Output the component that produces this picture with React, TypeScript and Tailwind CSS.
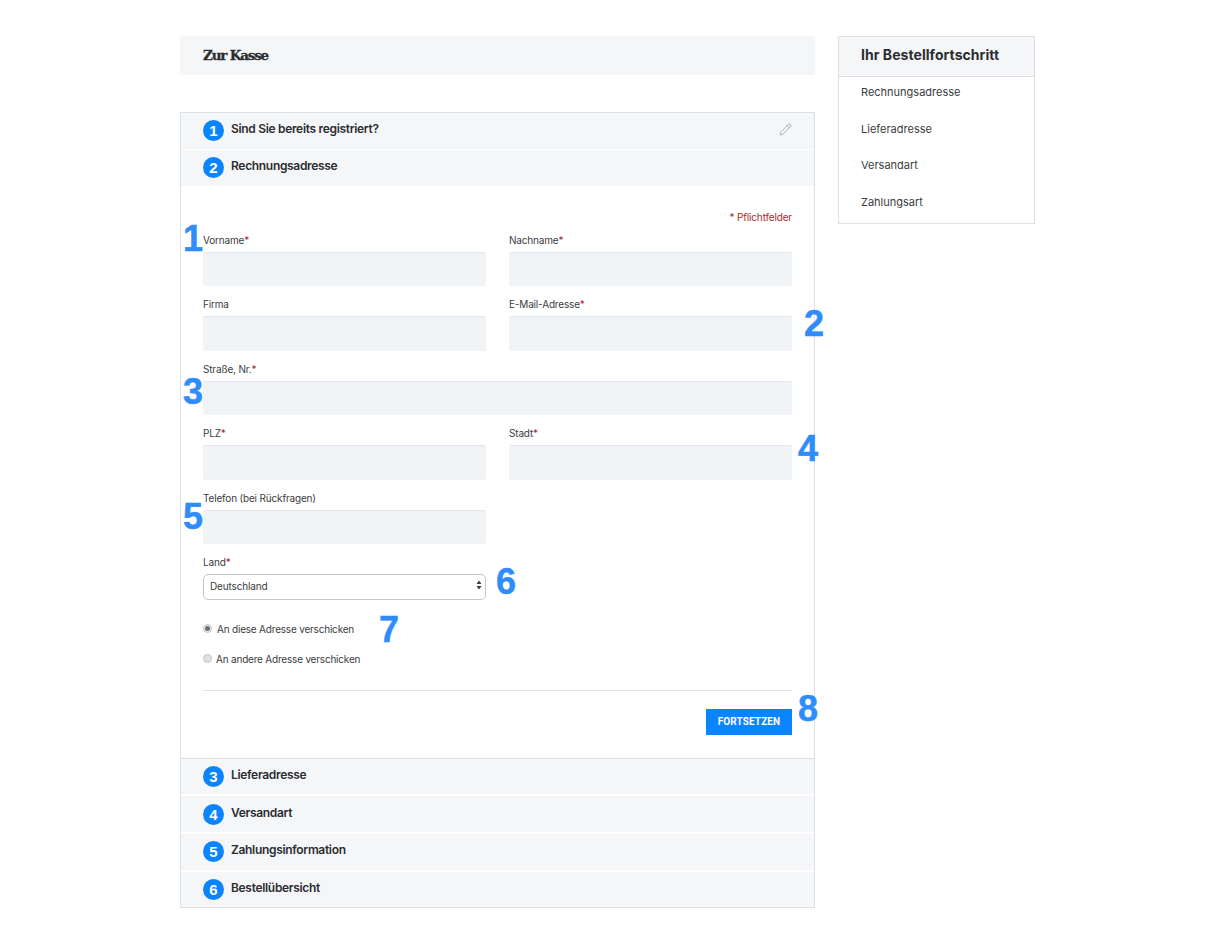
import { Pencil } from "lucide-react";

const font = "font-['Inter','Liberation_Sans',sans-serif]";

const Step = ({ n, title, icon }: { n: number; title: string; icon?: boolean }) => (
  <div className="flex h-[35.5px] items-center justify-between bg-[#f5f6f8] pl-[22px] pr-[22px]">
    <div className="flex items-center gap-[7px]">
      <span className="grid h-[21px] w-[21px] place-items-center rounded-full bg-[#0a84ff] font-['Liberation_Sans',sans-serif] text-[15px] leading-none font-bold text-white">
        {n}
      </span>
      <span className="relative -top-[1.5px] text-[12px] leading-none font-semibold tracking-[-0.32px] text-[#2b2d31]">
        {title}
      </span>
    </div>
    {icon && <Pencil className="relative -top-px h-[13px] w-[13px] text-[#8f9296]" strokeWidth={1.25} />}
  </div>
);

const Label = ({ text, required }: { text: string; required?: boolean }) => (
  <div className="h-[12px] text-[10px] leading-[12px] tracking-[-0.17px] text-[#3a3c40]">
    {text}
    {required && <span className="text-[#a8282c]">*</span>}
  </div>
);

const Field = ({ label, required, className }: { label: string; required?: boolean; className?: string }) => (
  <div className={className}>
    <Label text={label} required={required} />
    <div className="mt-[6px] h-[34.5px] rounded-[2px] border-t border-[#e3e7eb] bg-[#f1f4f7]" />
  </div>
);

const Mark = ({ n, className }: { n: number; className: string }) => (
  <span
    className={`absolute font-['Liberation_Sans',sans-serif] text-[36px] leading-none font-bold text-[#2f8dfb] [-webkit-text-stroke:0.5px_#2f8dfb] ${className}`}
  >
    {n}
  </span>
);

export default function App() {
  return (
    <div className={`relative flex min-h-[935px] items-start gap-[23px] bg-white pt-[36px] pl-[180px] ${font}`}>
      <div className="w-[635px]">
        <div className="flex h-[39px] items-center bg-[#f5f6f8] pl-[23px]">
          <h1 className="font-['DejaVu_Serif',serif] text-[13.5px] leading-none font-bold tracking-[-1.2px] text-[#2b2d31] [-webkit-text-stroke:0.3px_#2b2d31]">
            Zur Kasse
          </h1>
        </div>

        <div className="mt-[37px] flex flex-col border border-[#dcdfe3]">
          <div className="flex flex-col gap-[1.5px]">
            <Step n={1} title="Sind Sie bereits registriert?" icon />
            <Step n={2} title="Rechnungsadresse" />
          </div>

          <div className="relative px-[22px] pt-[25px]">
            <div className="h-[12px] text-right text-[10px] leading-[12px] tracking-[-0.15px] text-[#a8282c]">
              * Pflichtfelder
            </div>

            <div className="mt-[11px] grid grid-cols-2 gap-x-[23px] gap-y-[12px]">
              <Field label="Vorname" required />
              <Field label="Nachname" required />
              <Field label="Firma" />
              <Field label="E-Mail-Adresse" required />
              <Field label="Straße, Nr." required className="col-span-2" />
              <Field label="PLZ" required />
              <Field label="Stadt" required />
              <Field label="Telefon (bei Rückfragen)" />
            </div>

            <div className="mt-[12px] w-[283px]">
              <Label text="Land" required />
              <div className="relative mt-[4px]">
                <select className="h-[26px] w-full appearance-none rounded-[5px] border border-[#c4c6c9] bg-white pl-[6px] text-[10px] tracking-[-0.15px] text-[#3a3c40] outline-none">
                  <option>Deutschland</option>
                </select>
                <svg className="absolute top-[8px] right-[4px]" width="6" height="10" viewBox="0 0 6 10">
                  <path d="M3 0.5 5.5 4H.5zM3 9.5.5 6h5z" fill="#3a3c40" />
                </svg>
              </div>
            </div>

            <div className="mt-[24px] flex flex-col gap-[20px] text-[10px] leading-[10px] tracking-[-0.2px] text-[#3a3c40]">
              <label className="flex items-center gap-[5px]">
                <span className="grid h-[9px] w-[9px] place-items-center rounded-full border border-[#c4c6c9] bg-[#eceded]">
                  <span className="h-[5px] w-[5px] rounded-full bg-[#6c6e71]" />
                </span>
                An diese Adresse verschicken
              </label>
              <label className="flex items-center gap-[4px]">
                <span className="h-[9px] w-[9px] rounded-full border border-[#c4c6c9] bg-[#dfe0e1]" />
                An andere Adresse verschicken
              </label>
            </div>

            <div className="mt-[26px] border-t border-[#e3e4e6]" />
            <div className="mt-[18px] mb-[23px] flex justify-end">
              <button className="h-[26px] w-[86px] bg-[#0a84ff] font-['Roboto',sans-serif] text-[10px] leading-none font-bold tracking-[0.1px] text-white">
                FORTSETZEN
              </button>
            </div>
          </div>

          <div className="flex flex-col gap-[2.33px] border-t border-[#dcdfe3]">
            <Step n={3} title="Lieferadresse" />
            <Step n={4} title="Versandart" />
            <Step n={5} title="Zahlungsinformation" />
            <Step n={6} title="Bestellübersicht" />
          </div>
        </div>
      </div>

      <aside className="w-[197px] border border-[#dcdfe3]">
        <div className="flex h-[40px] items-center border-b border-[#dcdfe3] bg-[#f5f6f8] pb-[4px] pl-[22px] text-[14px] leading-none font-bold tracking-[0.05px] text-[#2b2d31]">
          Ihr Bestellfortschritt
        </div>
        <ul className="flex flex-col gap-[16.5px] pt-[5px] pb-[11px] pl-[22px] text-[11px] leading-[20px] text-[#3a3c40]">
          <li>Rechnungsadresse</li>
          <li>Lieferadresse</li>
          <li>Versandart</li>
          <li>Zahlungsart</li>
        </ul>
      </aside>

      <Mark n={1} className="top-[221px] left-[183px]" />
      <Mark n={2} className="top-[306px] left-[804px]" />
      <Mark n={3} className="top-[374px] left-[183px]" />
      <Mark n={4} className="top-[431px] left-[798px]" />
      <Mark n={5} className="top-[499px] left-[183px]" />
      <Mark n={6} className="top-[564px] left-[496px]" />
      <Mark n={7} className="top-[612px] left-[379px]" />
      <Mark n={8} className="top-[691px] left-[798px]" />
    </div>
  );
}
